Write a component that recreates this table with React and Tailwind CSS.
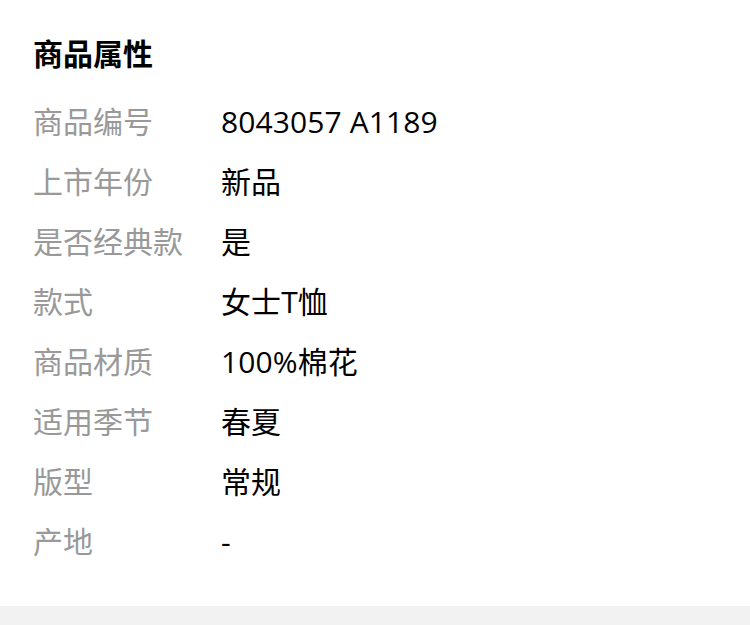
import React from 'react';

const attrs = [
    ['商品编号', '8043057 A1189'],
    ['上市年份', '新品'],
    ['是否经典款', '是'],
    ['款式', '女士T恤'],
    ['商品材质', '100%棉花'],
    ['适用季节', '春夏'],
    ['版型', '常规'],
    ['产地', '-'],
];

function App() {
    return (
        <div className="bg-white font-['Open_Sans','Noto_Sans_CJK_SC',sans-serif]">
            <div className="pl-[33px] pr-8 pt-[34px] pb-[34px]">
                <h2 className="text-[30px] leading-[40px] font-bold text-black mb-[18px]">商品属性</h2>
                <div>
                    {attrs.map(([label, value]) => (
                        <div key={label} className="flex h-[60px] items-center text-[30px] leading-[60px]">
                            <span className="w-[188px] shrink-0 text-[#999999]">{label}</span>
                            <span className="text-black tracking-[0.1px]">{value}</span>
                        </div>
                    ))}
                </div>
            </div>
            <div className="h-5 bg-[#f2f2f2]"></div>
        </div>
    );
}

export default App;
